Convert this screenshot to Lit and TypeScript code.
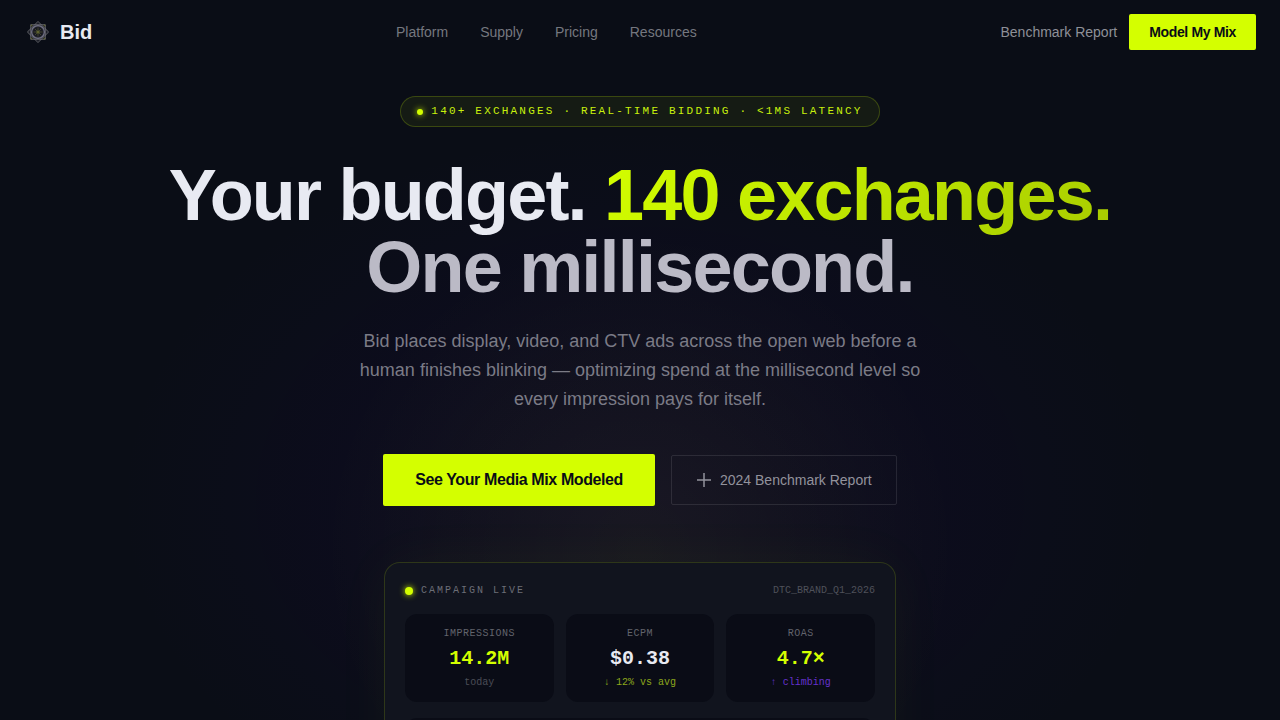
import { LitElement, html, css, svg } from "lit";
import { customElement, property } from "lit/decorators.js";
import { classMap } from "lit/directives/class-map.js";

type Tone = "lime" | "plain" | "violet" | "muted";

interface Metric {
  label: string;
  value: string;
  note: string;
  valueTone: Tone;
  noteTone: Tone;
}

const LINKS = ["Platform", "Supply", "Pricing", "Resources"];

const METRICS: Metric[] = [
  { label: "Impressions", value: "14.2M", note: "today", valueTone: "lime", noteTone: "muted" },
  { label: "eCPM", value: "$0.38", note: "↓ 12% vs avg", valueTone: "plain", noteTone: "lime" },
  { label: "ROAS", value: "4.7×", note: "↑ climbing", valueTone: "lime", noteTone: "violet" },
];

@customElement("bid-logo")
export class BidLogo extends LitElement {
  static styles = css`
    :host { display: block; width: 28px; height: 28px; }
    .mark { display: block; width: 100%; height: 100%; }
  `;

  render() {
    return html`<svg class="mark" viewBox="0 0 28 28" fill="none" aria-hidden="true">
      ${[0, 45].map((a) => svg`<rect x="6.5" y="6.5" width="15" height="15" rx="0.5"
        fill="#6b6c74" fill-opacity="0.18" stroke="#74757a" stroke-opacity="0.6" stroke-width="1"
        transform="rotate(${a} 14 14)" />`)}
      <circle cx="7.5" cy="7.5" r="1" fill="#6d7038" fill-opacity="0.7" />
      <circle cx="20.5" cy="7.5" r="1" fill="#6d7038" fill-opacity="0.7" />
      <circle cx="7.5" cy="20.5" r="1" fill="#6d7038" fill-opacity="0.7" />
      <circle cx="20.5" cy="20.5" r="1" fill="#6d7038" fill-opacity="0.7" />
      <circle cx="14" cy="14" r="6.4" stroke="#85859a" stroke-opacity="0.8" stroke-width="1.2" />
      <circle cx="14" cy="14" r="5" fill="#191a22" />
      <path d="M14 9.5v9M9.5 14h9M11 11l6 6M17 11l-6 6" stroke="#777b3c" stroke-opacity="0.6" stroke-width="0.7" />
      <circle cx="14" cy="14" r="1.6" fill="#5c602e" />
    </svg>`;
  }
}

@customElement("metric-tile")
export class MetricTile extends LitElement {
  @property({ attribute: false }) metric!: Metric;

  static styles = css`
    :host {
      display: block;
      padding: 12px;
      border-radius: 12px;
      background: #0a0c16;
      text-align: center;
      font-family: "Liberation Mono", monospace;
      font-size: 10px;
      line-height: 15px;
    }
    .label { color: #62646d; letter-spacing: 0.05em; text-transform: uppercase; }
    .value { margin: 4px 0 2px; font-size: 20px; line-height: 28px; font-weight: 700; }
    .note { color: #4b4d56; }
    .value.lime { color: #d4ff00; }
    .value.plain { color: #e8eaf2; }
    .note.lime { color: #8ca61c; }
    .note.violet { color: #6632cc; }
  `;

  render() {
    const m = this.metric;
    return html`
      <div class="label">${m.label}</div>
      <div class=${classMap({ value: true, [m.valueTone]: true })}>${m.value}</div>
      <div class=${classMap({ note: true, [m.noteTone]: true })}>${m.note}</div>
    `;
  }
}

@customElement("campaign-card")
export class CampaignCard extends LitElement {
  static styles = css`
    :host {
      display: block;
      box-sizing: border-box;
      width: 100%;
      max-width: 512px;
      padding: 20px;
      border: 1px solid rgba(212, 255, 0, 0.15);
      border-radius: 16px;
      background: #11141e;
      box-shadow: 0 0 60px rgba(212, 255, 0, 0.04);
      font-family: "Liberation Mono", monospace;
      font-size: 10px;
      line-height: 15px;
    }
    .head { display: flex; align-items: center; justify-content: space-between; margin-bottom: 16px; }
    .status { display: flex; align-items: center; gap: 8px; color: #6c6e77; letter-spacing: 2px; text-transform: uppercase; }
    .dot { width: 8px; height: 8px; border-radius: 50%; background: #d4ff00; box-shadow: 0 0 6px #d4ff00; }
    .code { color: #4f515a; }
    .tiles { display: grid; grid-template-columns: repeat(3, 1fr); gap: 12px; }
    .chart { height: 80px; margin-top: 16px; border-radius: 12px; background: #0a0c16; }
  `;

  render() {
    return html`
      <div class="head">
        <div class="status"><span class="dot"></span>Campaign live</div>
        <div class="code">DTC_BRAND_Q1_2026</div>
      </div>
      <div class="tiles">
        ${METRICS.map((m) => html`<metric-tile .metric=${m}></metric-tile>`)}
      </div>
      <div class="chart"></div>
    `;
  }
}

@customElement("app-root")
export class AppRoot extends LitElement {
  static styles = css`
    :host {
      display: block;
      height: 100vh;
      overflow: hidden;
      color: #e8eaf2;
      background:
        radial-gradient(circle 320px at 50% 550px, rgba(212, 255, 0, 0.05), rgba(212, 255, 0, 0.03) 40%, transparent),
        radial-gradient(ellipse 520px 370px at 50% 500px, rgba(80, 0, 200, 0.08), rgba(40, 0, 120, 0.06) 60%, transparent),
        #0a0d16;
      font-family: "Liberation Sans", Arial, sans-serif;
      font-size: 14px;
      line-height: 20px;
    }
    a { color: inherit; text-decoration: none; }
    button { font: inherit; border: 0; margin: 0; cursor: pointer; }
    .bar { display: flex; align-items: center; justify-content: space-between; height: 64px; padding: 0 24px; }
    .brand { display: flex; align-items: center; gap: 8px; font-size: 20px; line-height: 28px; font-weight: 700; }
    .links { display: flex; gap: 32px; color: #75777f; }
    .actions { display: flex; align-items: center; gap: 12px; color: #8e9098; }
    .primary { border-radius: 2px; background: #d4ff00; color: #0a0d16; font-weight: 700; letter-spacing: -0.025em; }
    .small { padding: 8px 20px; }
    .hero { display: flex; flex-direction: column; align-items: center; padding: 32px 24px; text-align: center; }
    .badge {
      display: flex;
      align-items: center;
      gap: 8px;
      padding: 8px 16px;
      border: 1px solid rgba(212, 255, 0, 0.2);
      border-radius: 16px;
      background: rgba(212, 255, 0, 0.06);
      color: #c9f10c;
      font-family: "Liberation Mono", monospace;
      font-size: 11px;
      line-height: 13px;
      letter-spacing: 0.2em;
      text-transform: uppercase;
    }
    .dot { width: 6px; height: 6px; border-radius: 50%; background: #d4ff00; box-shadow: 0 0 6px #d4ff00; }
    h1 { margin: 32px 0 24px; font-size: 72px; line-height: 72px; font-weight: 700; letter-spacing: -0.025em; }
    .accent { background: linear-gradient(135deg, #d4ff00, #a8cc00); background-clip: text; -webkit-background-clip: text; color: transparent; }
    .soft { display: block; color: #bbbac6; }
    .lead { max-width: 576px; margin: 0 0 40px; color: #7b7b86; font-size: 18px; line-height: 29px; }
    .choices { display: flex; align-items: center; gap: 16px; margin-bottom: 56px; }
    .large { padding: 16px 32px; font-size: 16px; }
    .outline {
      display: flex;
      align-items: center;
      gap: 8px;
      padding: 14px 24px;
      border: 1px solid rgba(255, 255, 255, 0.1);
      border-radius: 2px;
      color: #92929c;
    }
    .plus { width: 16px; height: 16px; }
  `;

  render() {
    return html`
      <header class="bar">
        <a class="brand" href="#"><bid-logo></bid-logo>Bid</a>
        <nav class="links">${LINKS.map((l) => html`<a href="#">${l}</a>`)}</nav>
        <div class="actions">
          <a href="#">Benchmark Report</a>
          <button class="primary small">Model My Mix</button>
        </div>
      </header>
      <main class="hero">
        <div class="badge"><span class="dot"></span>140+ Exchanges · Real-time bidding · &lt;1ms latency</div>
        <h1>Your budget. <span class="accent">140 exchanges.</span><span class="soft">One millisecond.</span></h1>
        <p class="lead">
          Bid places display, video, and CTV ads across the open web before a human finishes
          blinking — optimizing spend at the millisecond level so every impression pays for itself.
        </p>
        <div class="choices">
          <button class="primary large">See Your Media Mix Modeled</button>
          <a class="outline" href="#">
            <svg class="plus" viewBox="0 0 16 16" fill="none" stroke="currentColor" stroke-width="1.5" aria-hidden="true">
              <path d="M8 1v14M1 8h14" />
            </svg>
            2024 Benchmark Report
          </a>
        </div>
        <campaign-card></campaign-card>
      </main>
    `;
  }
}
